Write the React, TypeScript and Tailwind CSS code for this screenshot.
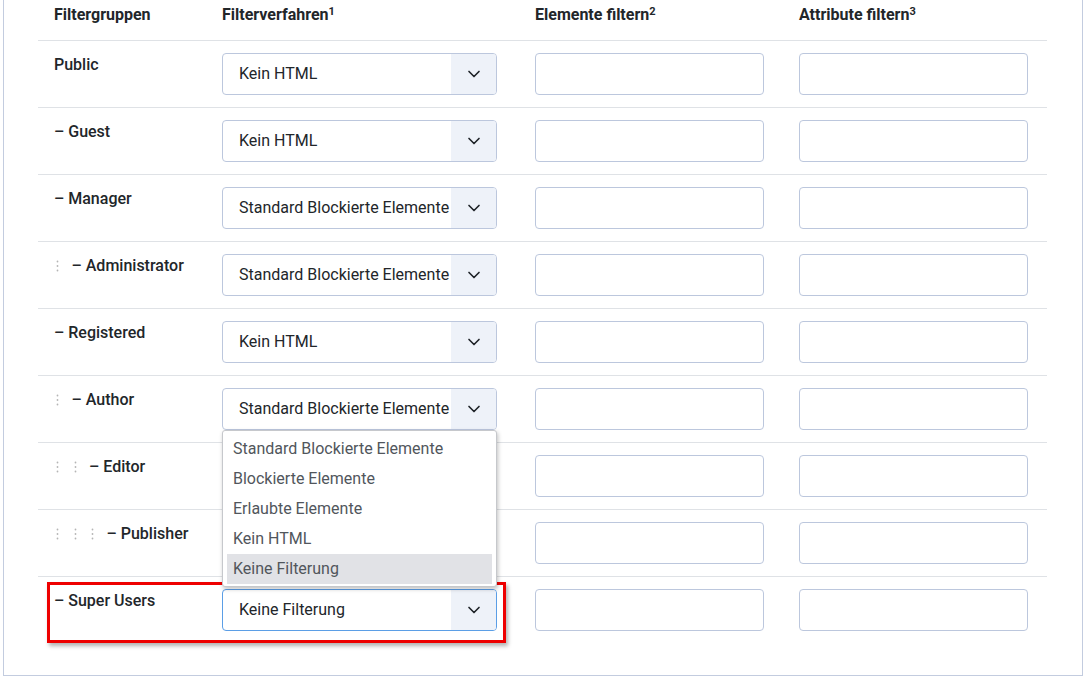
import { ChevronDown } from 'lucide-react';

type Row = { name: string; level: number; value: string };

const rows: Row[] = [
  { name: 'Public', level: -1, value: 'Kein HTML' },
  { name: 'Guest', level: 0, value: 'Kein HTML' },
  { name: 'Manager', level: 0, value: 'Standard Blockierte Elemente' },
  { name: 'Administrator', level: 1, value: 'Standard Blockierte Elemente' },
  { name: 'Registered', level: 0, value: 'Kein HTML' },
  { name: 'Author', level: 1, value: 'Standard Blockierte Elemente' },
  { name: 'Editor', level: 2, value: 'Kein HTML' },
  { name: 'Publisher', level: 3, value: 'Kein HTML' },
  { name: 'Super Users', level: 0, value: 'Keine Filterung' },
];

const options = [
  'Standard Blockierte Elemente',
  'Blockierte Elemente',
  'Erlaubte Elemente',
  'Kein HTML',
  'Keine Filterung',
];

function Dots() {
  return (
    <span className="w-[17.5px] shrink-0 flex pl-[2px] pt-[5px]">
      <svg width="3" height="12" viewBox="0 0 3 12">
        <circle cx="1.5" cy="1.5" r="0.9" fill="#b5b5b5" />
        <circle cx="1.5" cy="6" r="0.9" fill="#b5b5b5" />
        <circle cx="1.5" cy="10.5" r="0.9" fill="#b5b5b5" />
      </svg>
    </span>
  );
}

function Select({ value, focused, open }: { value: string; focused?: boolean; open?: boolean }) {
  return (
    <div className="relative w-[275px]">
      <div
        className={`h-[42px] rounded-[4px] border flex items-stretch overflow-hidden bg-white ${
          focused ? 'border-[#5b9ee6]' : 'border-[#bcc7dd]'
        }`}
      >
        <div className="flex-1 flex items-center pl-4 text-[16px] text-[#22262a] whitespace-nowrap overflow-hidden">
          {value}
        </div>
        <div className="w-[45px] bg-[#eef2f9] flex items-center justify-center">
          <ChevronDown size={20} strokeWidth={2} color="#1f2328" />
        </div>
      </div>
      {open && (
        <div className="absolute left-0 top-full z-10 w-[275px] bg-white border border-[#c6c8cc] rounded-[3px] shadow-[1px_2px_4px_rgba(0,0,0,0.25)] pt-[3px] pb-[2px] px-[4px]">
          {options.map((o) => (
            <div
              key={o}
              className={`h-[30px] flex items-center pl-[6px] text-[16px] text-[#51565c] ${
                o === 'Keine Filterung' ? 'bg-[#e1e2e6]' : ''
              }`}
            >
              {o}
            </div>
          ))}
        </div>
      )}
    </div>
  );
}

function Input() {
  return <div className="h-[42px] w-[229px] rounded-[4px] border border-[#bcc7dd] bg-white" />;
}

export default function App() {
  return (
    <div className="w-[1087px] h-[681px] bg-white overflow-hidden" style={{ fontFamily: 'Roboto, "Liberation Sans", sans-serif' }}>
      <div className="relative ml-[3px] w-[1080px] h-[676px] border-l border-r border-b border-[#c3ccdf] pl-[34px] pr-[35px]">
        {/* Kopfzeile */}
        <div className="grid grid-cols-[184px_313px_264px_248px] h-[40px] pt-[3px] text-[16px] font-bold text-[#22262a]">
          <div className="pl-4">Filtergruppen</div>
          <div>
            Filterverfahren<sup className="text-[11px]">1</sup>
          </div>
          <div>
            Elemente filtern<sup className="text-[11px]">2</sup>
          </div>
          <div>
            Attribute filtern<sup className="text-[11px]">3</sup>
          </div>
        </div>

        {rows.map((r) => (
          <div
            key={r.name}
            className="grid grid-cols-[184px_313px_264px_248px] h-[67px] border-t border-[#dfe2e6] pt-[12px]"
          >
            <div className="pl-4 pt-[1px] flex h-[42px] text-[16px] font-medium text-[#22262a] leading-[22px]">
              {Array.from({ length: Math.max(r.level, 0) }).map((_, i) => (
                <Dots key={i} />
              ))}
              <span className="whitespace-nowrap">{r.level >= 0 ? `– ${r.name}` : r.name}</span>
            </div>
            <div>
              <Select value={r.value} open={r.name === 'Author'} focused={r.name === 'Super Users'} />
            </div>
            <div>
              <Input />
            </div>
            <div>
              <Input />
            </div>
          </div>
        ))}

        {/* Markierung */}
        <div className="absolute left-[43px] top-[582px] w-[459px] h-[61px] border-[3px] border-[#ee0000] shadow-[2px_3px_4px_rgba(0,0,0,0.3)] pointer-events-none" />
      </div>
    </div>
  );
}
